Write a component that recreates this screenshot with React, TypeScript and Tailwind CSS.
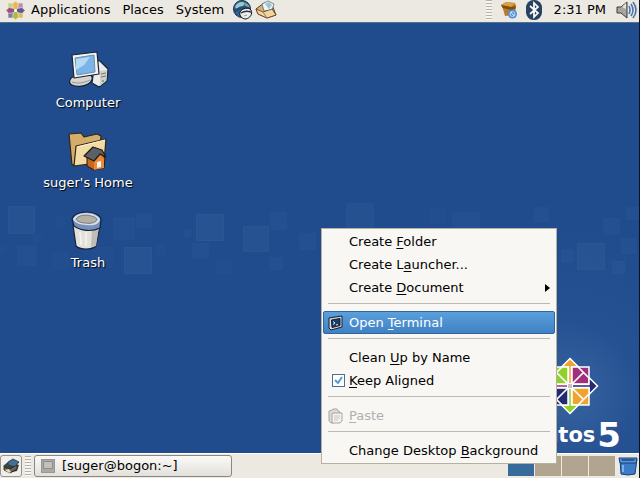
import { useState } from "react";
import type { ReactNode } from "react";

interface Square {
  x: number;
  y: number;
  w: number;
  h: number;
  o: number;
}

const SQUARES: Square[] = [
  { x: 8, y: 11, w: 26, h: 27, o: 0.05 },
  { x: 0, y: 51, w: 5, h: 6, o: 0.02 },
  { x: 17, y: 50, w: 19, h: 20, o: 0.03 },
  { x: 33, y: 40, w: 7, h: 6, o: 0.02 },
  { x: 56, y: 22, w: 8, h: 9, o: 0.02 },
  { x: 53, y: 57, w: 15, h: 16, o: 0.02 },
  { x: 92, y: 52, w: 20, h: 20, o: 0.02 },
  { x: 113, y: 22, w: 21, h: 22, o: 0.03 },
  { x: 136, y: 18, w: 15, h: 14, o: 0.03 },
  { x: 124, y: 52, w: 27, h: 26, o: 0.06 },
  { x: 156, y: 50, w: 8, h: 10, o: 0.02 },
  { x: 184, y: 34, w: 6, h: 7, o: 0.03 },
  { x: 192, y: 48, w: 16, h: 15, o: 0.03 },
  { x: 196, y: 19, w: 27, h: 26, o: 0.06 },
  { x: 217, y: 65, w: 14, h: 13, o: 0.02 },
  { x: 243, y: 31, w: 25, h: 25, o: 0.05 },
  { x: 270, y: 17, w: 16, h: 17, o: 0.03 },
  { x: 270, y: 62, w: 12, h: 12, o: 0.03 },
  { x: 299, y: 38, w: 16, h: 16, o: 0.03 },
  { x: 346, y: 8, w: 27, h: 26, o: 0.04 },
  { x: 430, y: 13, w: 14, h: 14, o: 0.02 },
  { x: 452, y: 17, w: 27, h: 26, o: 0.03 },
  { x: 534, y: 12, w: 14, h: 14, o: 0.03 },
  { x: 561, y: 54, w: 12, h: 13, o: 0.03 },
  { x: 577, y: 48, w: 27, h: 26, o: 0.05 },
  { x: 603, y: 23, w: 16, h: 16, o: 0.03 },
  { x: 612, y: 66, w: 12, h: 12, o: 0.04 },
  { x: 621, y: 43, w: 15, h: 15, o: 0.03 },
  { x: 626, y: 12, w: 12, h: 12, o: 0.03 },
];

const WORKSPACES = ["Workspace 1", "Workspace 2", "Workspace 3", "Workspace 4"];

function WallpaperSquares() {
  return (
    <svg className="absolute left-0 top-[195px]" width="640" height="80" aria-hidden="true">
      {SQUARES.map((s) => (
        <rect
          key={`${s.x}-${s.y}`}
          x={s.x + 0.5}
          y={s.y + 0.5}
          width={s.w}
          height={s.h}
          fill="#a8c4e8"
          fillOpacity={s.o}
          stroke="#a8c4e8"
          strokeOpacity={s.o}
        />
      ))}
    </svg>
  );
}

// One quadrant: square with its chevron lines, drawn for the top right and rotated
function Quadrant({ angle, square, tip }: { angle: number; square: string; tip: string }) {
  return (
    <g transform={`rotate(${angle})`}>
      <path d="M0-27.500 8.500-19H1.500V-2H-1.500V-19H-8.500z" fill={tip} stroke="#fff" strokeWidth="1.500" />
      <path d="M2-19H19V-2H2z" fill={square} stroke="#fff" strokeWidth="1.500" />
      <path d="M8-19 19-8M2-2 13-13" stroke="#fff" strokeWidth="1.700" />
    </g>
  );
}

function CentosMark() {
  return (
    <svg width="58" height="58" viewBox="-29 -29 58 58" aria-hidden="true">
      <path d="M0-28 28 0 0 28-28 0z" fill="#fff" fillOpacity=".5" />
      <Quadrant angle={0} square="#a0307c" tip="#efa430" />
      <Quadrant angle={90} square="#efa430" tip="#262a74" />
      <Quadrant angle={180} square="#262a74" tip="#8fd02c" />
      <Quadrant angle={270} square="#8fd02c" tip="#a0307c" />
      <rect x="-2.500" y="-2.500" width="5" height="5" fill="#c9bfd6" stroke="#fff" />
    </svg>
  );
}

function MenuLogo() {
  return (
    <svg width="19" height="19" viewBox="0 0 19 19" aria-hidden="true">
      <g stroke="#f2ead8" strokeWidth=".6">
        <path d="M2 2h7v7H2z" fill="#c3d37e" />
        <path d="M10 2h7v7h-7z" fill="#c08aae" />
        <path d="M10 10h7v7h-7z" fill="#e5b75c" />
        <path d="M2 10h7v7H2z" fill="#8379a8" />
        <path d="M9.500 0l3 3-1 5-2 1-2-1-1-5z" fill="#e9b751" />
        <path d="M19 9.500l-3 3-5-1-1-2 1-2 5-1z" fill="#5c5890" />
        <path d="M9.500 19l3-3-1-5-2-1-2 1-1 5z" fill="#a5bd49" />
        <path d="M0 9.500l3 3 5-1 1-2-1-2-5-1z" fill="#985080" />
      </g>
      <circle cx="9.500" cy="9.500" r="1.500" fill="#fff8e6" />
    </svg>
  );
}

function BrowserIcon() {
  return (
    <svg width="22" height="20" viewBox="0 0 22 20" aria-hidden="true">
      <circle cx="10" cy="9" r="8.500" fill="#2f6698" stroke="#152f4d" />
      <path d="M3 7c2-5 7-6 10-4l-2 3-4 1-1 4z" fill="#9cc9c4" />
      <path d="M12 3c3 0 5 2 6 5l-4-1z" fill="#78ad9b" />
      <path d="M2 10c5-4 12-5 17-2v3C13 8 7 9 3 13z" fill="#274b78" />
      <path d="M8 12c2-4 9-5 11-2 2 4-1 8-5 9-4 0-7-3-6-7z" fill="#e9edf0" stroke="#111" />
      <path d="M9 13c3-2 7-2 10-1" stroke="#333" strokeWidth="1.500" fill="none" />
      <path d="M12 16l3-1" stroke="#999" />
    </svg>
  );
}

function MailIcon() {
  return (
    <svg width="22" height="20" viewBox="0 0 22 20" aria-hidden="true">
      <path d="M1 9l8-6 8 2 4 10-9 3-9-4z" fill="#dcae6c" stroke="#5e4120" />
      <path d="M7 4l6-3 6 3-2 6-8 1z" fill="#eef3f4" stroke="#59707a" strokeWidth=".8" />
      <path d="M10 4l4-2 3 3-3 4z" fill="#9fc4d5" />
      <path d="M1 9l7 3 9-3 4 6-9 3-9-4z" fill="#f0d4a2" stroke="#5e4120" strokeWidth=".8" />
      <path d="M8 12l4 6" stroke="#a77943" />
    </svg>
  );
}

function PackageIcon() {
  return (
    <svg width="18" height="18" viewBox="0 0 18 18" aria-hidden="true">
      <path d="M1 4l5-3 9 1 1 3-1 9-10 1-2-7z" fill="#b87d26" />
      <path d="M1 4l5-3 9 1-4 4z" fill="#d7a047" />
      <path d="M1 4l10 2 5-1-1 3-4 1-8-2z" fill="#7c4e13" />
      <circle cx="12.500" cy="13" r="4.500" fill="#4d8fdc" />
      <circle cx="12.500" cy="13" r="2.500" fill="none" stroke="#c2dcf5" />
      <path d="M11 11l3 4" stroke="#e8f3ff" />
    </svg>
  );
}

function BluetoothIcon() {
  return (
    <svg width="16" height="20" viewBox="0 0 16 20" aria-hidden="true">
      <rect x="0" y="0" width="16" height="20" rx="7.500" fill="#27415f" />
      <path d="M4 6l8 7-4 4V3l4 4-8 7" fill="none" stroke="#fff" strokeWidth="1.700" />
    </svg>
  );
}

function VolumeIcon() {
  return (
    <svg width="22" height="20" viewBox="0 0 22 20" aria-hidden="true">
      <path d="M1 7h4l6-5v16l-6-5H1z" fill="#a6a6a1" stroke="#3a3a3a" strokeLinejoin="round" />
      <path d="M6 7l4-4v6z" fill="#e4e4df" />
      <path d="M13 6q2 4 0 8M15 4q4 6 0 12M17 2q6 8 0 16" fill="none" stroke="#4a76ae" strokeWidth="1.600" />
    </svg>
  );
}

function ComputerIcon() {
  return (
    <svg width="44" height="40" viewBox="0 0 44 40" aria-hidden="true">
      <path d="M29 10l5 0 8 8-1 12-8 6-7-4z" fill="#ecebe8" stroke="#16233a" strokeWidth="1.200" />
      <path d="M34 20l7-1-1 11-6 5z" fill="#cfcfca" />
      <path d="M35 23l5-1M35 26l5-1" stroke="#777" />
      <circle cx="37" cy="30" r="1" fill="#55a84a" />
      <path d="M4 29c1-3 5-5 10-4l10-1c4 2 2 7-2 9-5 3-12 3-16 1-2-1-3-3-2-5z" fill="#d6d5d0" stroke="#16233a" strokeWidth="1.200" />
      <path d="M6 31c5 2 12 1 18-2" fill="none" stroke="#96958f" />
      <path d="M6 4L31 1l2 22-25 4z" fill="#f5f4f1" stroke="#16233a" strokeWidth="1.200" strokeLinejoin="round" />
      <path d="M9 7l19-3 1 17-18 3z" fill="#7bb4e8" stroke="#6c8fad" />
      <path d="M10 8l14-2-6 8-8 5z" fill="#b5daf6" />
    </svg>
  );
}

function HomeIcon() {
  return (
    <svg width="44" height="40" viewBox="0 0 44 40" aria-hidden="true">
      <path d="M3 3l12-1 3 4 13-3 4 2-2 24L6 34z" fill="#d3ad69" stroke="#2f2413" strokeWidth="1.200" strokeLinejoin="round" />
      <path d="M10 15l30-7-2 23-30 4z" fill="#f3dba4" stroke="#2f2413" strokeWidth="1.200" strokeLinejoin="round" />
      <path d="M11 16l28-7" stroke="#fff2cc" />
      <path d="M21 26l11-7 7 8-1 10-10 2-7-4z" fill="#c9671e" stroke="#2b1508" />
      <path d="M28 29l5-6 5 5v9l-10 2z" fill="#e88a3c" />
      <path d="M18 25l9-9 9 3 4 7-6-3-6 7z" fill="#5d6066" stroke="#1c1c1e" strokeWidth="1.200" strokeLinejoin="round" />
      <path d="M31 31l4-1v6l-4 1z" fill="#f7f2e8" />
    </svg>
  );
}

function TrashIcon() {
  return (
    <svg width="44" height="40" viewBox="0 0 44 40" aria-hidden="true">
      <path d="M7 14l3 21c4 4 16 4 20 0l4-21z" fill="#e3e1db" stroke="#14233b" strokeWidth="1.200" />
      <path d="M26 16l-1 20 5-1 3-19z" fill="#bfbdb5" />
      <path d="M6 8C8 3 13 1 21 1c8 0 14 4 14 8l-1 8c-8 4-19 3-26-2z" fill="#7690b8" stroke="#14233b" strokeWidth="1.200" />
      <path d="M7 8c2-4 7-6 14-6 8 1 13 4 13 7-2 5-8 6-14 5-6 0-12-3-13-6z" fill="#d5e0ef" />
      <path d="M10 8c2-3 6-4 11-4 5 1 10 2 10 5-2 3-7 4-12 3-4 0-9-2-9-4z" fill="#b5b0a4" stroke="#545a66" strokeWidth=".7" />
      <path d="M14 21l1 13M20 21v14" stroke="#f5f4ef" strokeWidth="1.500" />
    </svg>
  );
}

function TerminalIcon() {
  return (
    <svg width="16" height="16" viewBox="0 0 16 16" aria-hidden="true">
      <path d="M1 3l13-2v11L3 15l-2-2z" fill="#d8d8d4" stroke="#131e33" strokeLinejoin="round" />
      <path d="M3.500 5l8.500-1.500v7L4 12.500z" fill="#1b3c6d" stroke="#111c30" />
      <path d="M5 6.500l2 1.500-2 1.500M8 10l2-.4" fill="none" stroke="#fff" strokeWidth=".9" />
    </svg>
  );
}

function PasteIcon() {
  return (
    <svg width="16" height="16" viewBox="0 0 16 16" aria-hidden="true">
      <path d="M1 3l3-1 1-1h4l1 2 2 1v10l-9 1-2-2z" fill="#dedbd8" stroke="#a9a4a2" />
      <path d="M4 5h10v8l-2 2H4z" fill="#f4f3f0" stroke="#a9a4a2" />
      <path d="M6 8h6M6 10h6M6 12h4" stroke="#c9c6c2" />
    </svg>
  );
}

function ShowDesktopIcon() {
  return (
    <svg width="18" height="16" viewBox="0 0 18 16" aria-hidden="true">
      <path d="M1 8l5-4 11 3-2 6-8 2z" fill="#42453f" />
      <path d="M6 4l5-3 6 3-4 5-7-2z" fill="#456f97" stroke="#20303c" strokeWidth=".8" />
      <path d="M2 9l6 2 7-4v4l-7 4-6-3z" fill="#69695c" stroke="#1e211e" strokeWidth=".8" />
      <path d="M3 12l4-1 2 3-2 1z" fill="#e7d9b6" />
    </svg>
  );
}

function PanelTrashIcon() {
  return (
    <svg width="20" height="20" viewBox="0 0 20 20" aria-hidden="true">
      <path d="M2 3l1 15q7 2 14 0l2-15z" fill="#3c7bc8" stroke="#173f78" />
      <path d="M1 2h18l-1 5H2z" fill="#5b97dc" stroke="#173f78" />
      <path d="M3 3h14l-1 2H4z" fill="#2a5795" />
      <path d="M5 9v7" stroke="#7db0ea" strokeWidth="2" />
    </svg>
  );
}

function Handle() {
  return (
    <div className="h-5 w-[6px] bg-[repeating-linear-gradient(to_bottom,#b5b2aa_0_1px,#f7f5f0_1px_3px)]" />
  );
}

function DesktopIcon({ label, children }: { label: string; children: ReactNode }) {
  return (
    <button className="flex h-20 w-full flex-col items-center gap-1">
      {children}
      <span className="leading-4 text-white [text-shadow:1px_1px_1px_#000]">{label}</span>
    </button>
  );
}

interface MenuItemProps {
  before?: string;
  mnemonic: string;
  after: string;
  icon?: ReactNode;
  active?: boolean;
  disabled?: boolean;
  submenu?: boolean;
}

function MenuItem({ before = "", mnemonic, after, icon, active, disabled, submenu }: MenuItemProps) {
  return (
    <button
      role="menuitem"
      disabled={disabled}
      aria-haspopup={submenu ? "menu" : undefined}
      className={`flex h-[23px] w-full items-center rounded-[2px] border px-1 text-left ${
        active
          ? "border-[#31659b] bg-linear-to-b from-[#5c9fdc] to-[#3f82c4] text-white"
          : disabled
            ? "border-transparent text-[#b3b0ae]"
            : "border-transparent text-black"
      }`}
    >
      <span className="w-[21px] shrink-0">{icon}</span>
      <span className="flex-1 whitespace-nowrap">
        {before}
        <u className="underline-offset-2">{mnemonic}</u>
        {after}
      </span>
      {submenu && (
        <svg width="5" height="8" viewBox="0 0 5 8" aria-hidden="true">
          <path d="M0 0l5 4-5 4z" fill="#000" />
        </svg>
      )}
    </button>
  );
}

function Separator() {
  return <div role="separator" className="mx-[5px] mt-1 mb-[7px] h-px bg-[#bfbab0]" />;
}

function ContextMenu() {
  const [aligned, setAligned] = useState(true);

  return (
    <div
      role="menu"
      className="absolute right-[82px] bottom-[14px] w-[236px] border border-[#b7b09f] bg-[#f8f7f3] p-px"
    >
      <MenuItem before="Create " mnemonic="F" after="older" />
      <MenuItem before="Create L" mnemonic="a" after="uncher..." />
      <MenuItem before="Create " mnemonic="D" after="ocument" submenu />
      <Separator />
      <MenuItem before="Open " mnemonic="T" after="erminal" icon={<TerminalIcon />} active />
      <Separator />
      <MenuItem before="Clean " mnemonic="U" after="p by Name" />
      <label className="flex h-[23px] items-center pl-[9px]">
        <span className="relative mr-1 size-[13px]">
          <input
            type="checkbox"
            checked={aligned}
            onChange={(e) => setAligned(e.target.checked)}
            className="block size-[13px] appearance-none border border-[#4c6f8f] bg-white"
          />
          {aligned && (
            <svg className="pointer-events-none absolute inset-0" width="13" height="13" viewBox="0 0 13 13" aria-hidden="true">
              <path d="M3 6l3 3 4-6" fill="none" stroke="#5b9ace" strokeWidth="2" />
            </svg>
          )}
        </span>
        <span>
          <u className="underline-offset-2">K</u>eep Aligned
        </span>
      </label>
      <Separator />
      <MenuItem mnemonic="P" after="aste" icon={<PasteIcon />} disabled />
      <Separator />
      <MenuItem before="Change Desktop " mnemonic="B" after="ackground" />
    </div>
  );
}

function TopPanel() {
  return (
    <header className="flex h-[23px] shrink-0 items-center justify-between border-b border-[#54708f] bg-[#ece9e3] pb-[2px]">
      <nav className="flex items-center pl-[6px]">
        <button className="flex items-center gap-[6px]">
          <MenuLogo />
          Applications
        </button>
        <button className="ml-3">Places</button>
        <button className="ml-3">System</button>
        <button aria-label="Web Browser" className="ml-2">
          <BrowserIcon />
        </button>
        <button aria-label="Mail" className="ml-px">
          <MailIcon />
        </button>
      </nav>
      <div className="flex items-center pr-px">
        <Handle />
        <button aria-label="Updates" className="ml-2">
          <PackageIcon />
        </button>
        <button aria-label="Bluetooth" className="ml-2">
          <BluetoothIcon />
        </button>
        <time className="ml-3">2:31 PM</time>
        <button aria-label="Volume" className="ml-[10px]">
          <VolumeIcon />
        </button>
      </div>
    </header>
  );
}

function BottomPanel() {
  return (
    <footer className="flex h-[25px] shrink-0 items-center border-t border-white bg-[#ece9e3]">
      <button
        aria-label="Show Desktop"
        className="flex h-[22px] w-[22px] items-center justify-center rounded-[3px] border border-[#98948b] bg-[#f1efea]"
      >
        <ShowDesktopIcon />
      </button>
      <div className="ml-[3px]">
        <Handle />
      </div>
      <button className="ml-[3px] flex h-[22px] w-[198px] items-center gap-[7px] rounded-[3px] border border-[#8b877f] bg-linear-to-b from-[#fbfaf8] to-[#e3e0da] pl-[6px]">
        <svg width="14" height="14" viewBox="0 0 14 14" aria-hidden="true">
          <rect x=".5" y=".5" width="13" height="13" fill="#aaa9a6" stroke="#989794" />
          <rect x="2.500" y="2.500" width="9" height="7" fill="#c2c1be" stroke="#8e8d8a" />
        </svg>
        [suger@bogon:~]
      </button>
      <div className="ml-auto flex items-center gap-px">
        {WORKSPACES.map((name, i) => (
          <button
            key={name}
            aria-label={name}
            className={`h-5 w-[26px] ${i === 0 ? "bg-[#386a9c]" : "bg-[#b1a590]"}`}
          />
        ))}
      </div>
      <button aria-label="Trash" className="ml-[3px] mr-px">
        <PanelTrashIcon />
      </button>
    </footer>
  );
}

export default function App() {
  return (
    <div className="relative flex h-screen flex-col overflow-hidden border-r border-[#0b1424] bg-[#204c8e] font-['DejaVu_Sans',sans-serif] text-[13px] leading-4 text-black">
      <TopPanel />
      <WallpaperSquares />
      <main className="relative flex-1 bg-[radial-gradient(circle_at_89%_86%,#6c93c455_0,#3e6cab2a_70px,transparent_170px)] pt-7">
        <div className="flex w-[176px] flex-col">
          <DesktopIcon label="Computer">
            <ComputerIcon />
          </DesktopIcon>
          <DesktopIcon label="suger's Home">
            <HomeIcon />
          </DesktopIcon>
          <DesktopIcon label="Trash">
            <TrashIcon />
          </DesktopIcon>
        </div>
        <div className="absolute right-[18px] bottom-0 flex flex-col items-end text-white">
          <div className="mr-[22px] mb-[2px]">
            <CentosMark />
          </div>
          <div className="flex items-center gap-[2px] font-bold">
            <span className="text-[21px] leading-9">centos</span>
            <span className="text-[34px] leading-9">5</span>
          </div>
        </div>
      </main>
      <BottomPanel />
      <ContextMenu />
    </div>
  );
}
